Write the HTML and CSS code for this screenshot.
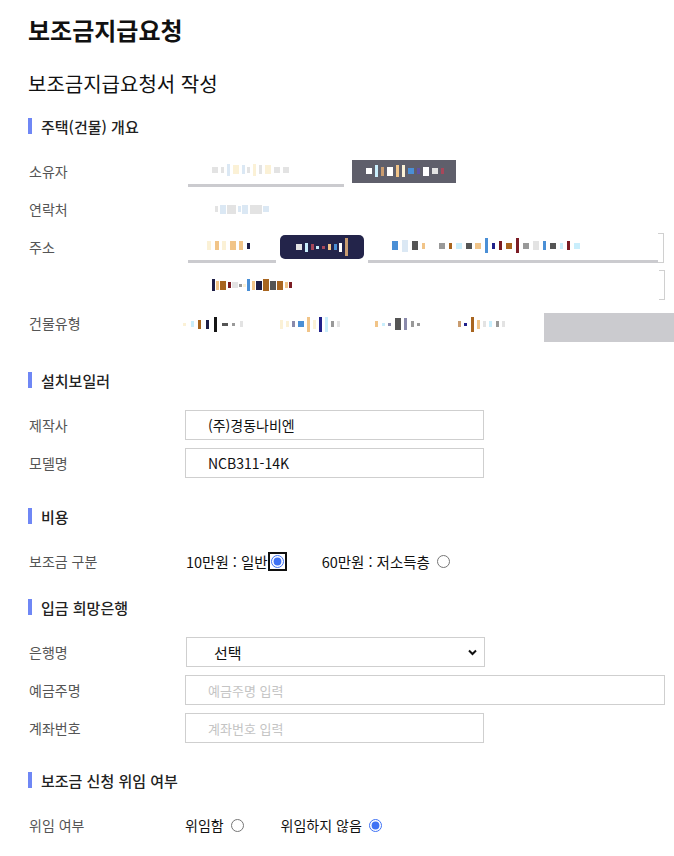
FILE: index.html
```html
<!DOCTYPE html>
<html lang="ko">
<head>
<meta charset="utf-8">
<title>보조금지급요청</title>
<link rel="stylesheet" href="styles.css">
</head>
<body>
<main class="page">
  <h1 class="title">보조금지급요청</h1>
  <h2 class="subtitle">보조금지급요청서 작성</h2>

  <section class="sec sec-1">
    <h3 class="sec-head">주택(건물) 개요</h3>
    <div class="row">
      <span class="label">소유자</span>
      <div class="field">
        <span class="uline owner-in"><span class="pix owner-pix"><b class="k7 w6 h6"></b><b class="k7 w3 h6"></b><b class="kc w3 h12"></b><b class="k3 w6 h9"></b><b class="kc w3 h9"></b><b class="k7 w3 h6"></b><b class="k3 w3 h12"></b><b class="k7 w3 h9"></b><b class="k3 w6 h9"></b><b class="k7 w6 h6"></b><b class="k7 w6 h6"></b></span></span>
        <span class="chip chip-grey"><span class="pix chip-pix"><b class="kb w6 h6"></b><b class="k4 w3 h12"></b><b class="kt w3 h9"></b><b class="kb w6 h9"></b><b class="k2 w3 h12"></b><b class="k3 w3 h12"></b><b class="k8 w6 h6"></b><b class="kv w3 h6"></b><b class="kb w6 h9"></b><b class="k7 w6 h6"></b><b class="kr w3 h6"></b></span></span>
      </div>
    </div>
    <div class="row">
      <span class="label">연락처</span>
      <div class="field">
        <span class="pix phone-pix"><b class="k7 w3 h6"></b><b class="kc w6 h9"></b><b class="k7 w9 h9"></b><b class="kc w3 h6"></b><b class="kc w6 h9"></b><b class="k7 w12 h9"></b><b class="kc w6 h6"></b></span>
      </div>
    </div>
    <div class="row">
      <span class="label">주소</span>
      <div class="field">
        <span class="uline zip-in"><span class="pix zip-pix"><b class="k3 w4 h9"></b><b class="k2 w4 h9"></b><b class="k3 w4 h9"></b><b class="k2 w6 h9"></b><b class="k2 w4 h9"></b><b class="k0 w3 h6"></b></span></span>
        <span class="chip chip-navy"><span class="pix navy-pix"><b class="k7 w6 h6"></b><b class="k4 w3 h9"></b><b class="kr w3 h6"></b><b class="k4 w3 h3"></b><b class="kr w3 h3"></b><b class="k2 w3 h6"></b><b class="k8 w3 h6"></b><b class="kb w3 h9"></b><b class="kt w3 h18"></b></span></span>
        <span class="addr-box">
          <span class="uline addr-in"><span class="pix addr-pix"><b class="k8 w6 h9"></b><b class="kc w6 h12"></b><b class="k5 w6 h9"></b><b class="k2 w3 h6"></b><b class="kb w6 h6"></b><b class="k6 w6 h6"></b><b class="k1 w3 h6"></b><b class="k4 w6 h6"></b><b class="k5 w6 h6"></b><b class="k2 w6 h6"></b><b class="k8 w3 h15"></b><b class="ka w3 h6"></b><b class="k9 w3 h9"></b><b class="k1 w6 h6"></b><b class="k9 w3 h15"></b><b class="k6 w6 h6"></b><b class="k7 w6 h9"></b><b class="k8 w3 h9"></b><b class="k5 w6 h6"></b><b class="k4 w3 h6"></b><b class="k9 w3 h9"></b><b class="k4 w6 h6"></b></span></span>
          <span class="bracket"></span>
        </span>
      </div>
    </div>
    <div class="row">
      <span class="label"></span>
      <div class="field">
        <span class="pix addr2-pix"><b class="k0 w3 h12"></b><b class="k2 w3 h9"></b><b class="k1 w6 h9"></b><b class="k9 w3 h6"></b><b class="k7 w6 h6"></b><b class="k6 w3 h3"></b><b class="k3 w3 h3"></b><b class="k8 w3 h12"></b><b class="k2 w3 h9"></b><b class="k0 w6 h9"></b><b class="k1 w6 h12"></b><b class="k5 w6 h9"></b><b class="k1 w6 h9"></b><b class="k2 w3 h6"></b><b class="k9 w3 h6"></b></span>
        <span class="bracket bracket-end"></span>
      </div>
    </div>
    <div class="row">
      <span class="label">건물유형</span>
      <div class="field">
        <span class="pix bt bt1"><b class="k3 w3 h3"></b><b class="k4 w3 h6"></b><b class="k1 w3 h9"></b><b class="k0 w3 h9"></b><b class="kk w3 h15"></b><b class="k5 w6 h3"></b><b class="k6 w3 h3"></b><b class="k7 w3 h6"></b></span>
        <span class="pix bt bt2"><b class="k3 w3 h9"></b><b class="k3 w3 h6"></b><b class="kp w3 h6"></b><b class="k8 w6 h6"></b><b class="k2 w3 h15"></b><b class="k3 w3 h9"></b><b class="ka w3 h15"></b><b class="k4 w3 h15"></b><b class="k6 w3 h6"></b><b class="k7 w3 h6"></b></span>
        <span class="pix bt bt3"><b class="k2 w3 h6"></b><b class="k4 w3 h3"></b><b class="kp w3 h3"></b><b class="k5 w6 h12"></b><b class="kp w3 h12"></b><b class="k6 w3 h6"></b><b class="k6 w3 h3"></b></span>
        <span class="pix bt bt4"><b class="kt w3 h6"></b><b class="ka w3 h3"></b><b class="k1 w3 h15"></b><b class="k2 w3 h9"></b><b class="k7 w3 h6"></b><b class="k4 w3 h6"></b><b class="k6 w3 h6"></b><b class="k7 w3 h6"></b></span>
        <span class="grey-box"></span>
      </div>
    </div>
  </section>

  <section class="sec sec-2">
    <h3 class="sec-head">설치보일러</h3>
    <div class="row">
      <span class="label">제작사</span>
      <div class="field"><input class="input" type="text" value="(주)경동나비엔"></div>
    </div>
    <div class="row">
      <span class="label">모델명</span>
      <div class="field"><input class="input" type="text" value="NCB311-14K"></div>
    </div>
  </section>

  <section class="sec sec-3">
    <h3 class="sec-head">비용</h3>
    <div class="row">
      <span class="label">보조금 구분</span>
      <div class="field options">
        <label class="opt">10만원 : 일반<input class="radio focused" type="radio" name="cost" checked></label>
        <label class="opt">60만원 : 저소득층 <input class="radio" type="radio" name="cost"></label>
      </div>
    </div>
  </section>

  <section class="sec sec-4">
    <h3 class="sec-head">입금 희망은행</h3>
    <div class="row">
      <span class="label">은행명</span>
      <div class="field">
        <span class="select-wrap">
          <select class="select"><option>선택</option></select>
          <svg class="chev" width="9" height="7" viewBox="0 0 9 7"><path d="M1 1.5 L4.5 5 L8 1.5" fill="none" stroke="#111" stroke-width="2"/></svg>
        </span>
      </div>
    </div>
    <div class="row">
      <span class="label">예금주명</span>
      <div class="field"><input class="input input-wide" type="text" placeholder="예금주명 입력"></div>
    </div>
    <div class="row">
      <span class="label">계좌번호</span>
      <div class="field"><input class="input" type="text" placeholder="계좌번호 입력"></div>
    </div>
  </section>

  <section class="sec sec-5">
    <h3 class="sec-head">보조금 신청 위임 여부</h3>
    <div class="row">
      <span class="label">위임 여부</span>
      <div class="field options options-2">
        <label class="opt opt-sm">위임함 <input class="radio" type="radio" name="deleg"></label>
        <label class="opt opt-sm">위임하지 않음 <input class="radio" type="radio" name="deleg" checked></label>
      </div>
    </div>
  </section>
</main>
</body>
</html>
```

FILE: styles.css
```css
html, body {
  margin: 0;
  padding: 0;
  background: #fff;
}

body {
  font-family: "Noto Sans CJK KR", "Noto Sans", sans-serif;
  color: #111;
  overflow: hidden;
}

.page {
  padding: 13px 0 0 28px;
  width: 636px;
}

.title {
  margin: 0;
  font-size: 24px;
  font-weight: 700;
  line-height: 34px;
  color: #111;
}

.subtitle {
  margin: 22px 0 0;
  font-size: 20px;
  font-weight: 400;
  line-height: 30px;
  color: #111;
}

.sec-head {
  display: flex;
  align-items: center;
  gap: 9px;
  height: 30px;
  margin: 0 0 11px;
  font-size: 15px;
  font-weight: 500;
  color: #222;
}

.sec-head::before {
  content: "";
  width: 4px;
  height: 16px;
  background: #6f87f5;
}

.sec-1 { margin-top: 12px; }
.sec-2 { margin-top: 23px; }
.sec-3 { margin-top: 19px; }
.sec-4 { margin-top: 12px; }
.sec-5 { margin-top: 18px; }

.row {
  display: grid;
  grid-template-columns: 158px 1fr;
  height: 38px;
  align-items: center;
}

.label {
  font-size: 14px;
  color: #555;
  padding-left: 1px;
}

.field {
  display: flex;
  align-items: center;
  height: 38px;
}

/* blurred / pixelated content */
.pix {
  display: inline-flex;
  flex: none;
  align-items: center;
  justify-content: space-between;
}

.pix b { display: block; flex: none; }

.w3 { width: 3px; }
.w4 { width: 4px; }
.w6 { width: 6px; }
.w9 { width: 9px; }
.w12 { width: 12px; }
.h3 { height: 3px; }
.h6 { height: 6px; }
.h9 { height: 9px; }
.h12 { height: 12px; }
.h15 { height: 15px; }
.h18 { height: 18px; }

.k0 { background: #1d1d45; }
.k1 { background: #a8651f; }
.k2 { background: #f1c488; }
.k3 { background: #fbf1d6; }
.k4 { background: #c9eefc; }
.k5 { background: #555; }
.k6 { background: #999; }
.k7 { background: #e3e3e3; }
.k8 { background: #4a8fd6; }
.k9 { background: #7b1c24; }
.ka { background: #20208a; }
.kb { background: #fff; }
.kc { background: #dbe8f4; }
.kt { background: #c99c70; }
.kv { background: #5e52a6; }
.kr { background: #a8475a; }
.kk { background: #161616; }
.kp { background: #8a8aab; }

.uline {
  box-sizing: border-box;
  display: flex;
  align-items: center;
  height: 28px;
  margin-top: 4px;
  border-bottom: 3px solid #cbcbcf;
}

.owner-in {
  width: 156px;
  margin-left: 2px;
}

.owner-pix { width: 77px; margin-left: 24px; margin-top: -4px; }

.chip {
  display: flex;
  align-items: center;
  box-sizing: border-box;
}

.chip-grey {
  width: 104px;
  height: 23px;
  margin-left: 8px;
  padding-left: 14px;
  background: #5f5f6b;
}

.chip-pix { width: 78px; }

.chip-navy {
  width: 84px;
  height: 24px;
  margin-left: 4px;
  border-radius: 5px;
  background: #23244a;
  padding-left: 16px;
}

.navy-pix { width: 52px; }

.phone-pix { width: 54px; margin-left: 29px; }

.zip-in {
  width: 88px;
  margin-left: 2px;
}

.zip-pix { width: 43px; margin-left: 19px; margin-top: -4px; }

.addr-box {
  display: flex;
  align-items: flex-end;
  width: 296px;
  margin-left: 4px;
}

.addr-in {
  flex: 1;
}

.addr-pix { width: 188px; margin-left: 24px; margin-top: -4px; }

.bracket {
  box-sizing: border-box;
  flex: none;
  width: 6px;
  height: 30px;
  border: 1px solid #d0d0d0;
  border-left: none;
}

.addr2-pix { width: 80px; margin-left: 26px; }

.bracket-end { margin-left: auto; margin-right: -1px; }

.bt { margin-top: 2px; }
.bt1 { width: 60px; margin-left: -3px; }
.bt2 { width: 60px; margin-left: 37px; }
.bt3 { width: 45px; margin-left: 35px; }
.bt4 { width: 47px; margin-left: 38px; }

.grey-box {
  flex: none;
  width: 140px;
  height: 29px;
  margin-left: 39px;
  margin-top: 8px;
  background: #cbcbcf;
}

/* inputs */
.input {
  box-sizing: border-box;
  width: 299px;
  height: 30px;
  margin: 0 0 0 -1px;
  padding: 0 0 0 22px;
  border: 1px solid #cfcfcf;
  font-family: inherit;
  font-size: 14px;
  color: #111;
  background: #fff;
  outline: none;
}

.input::placeholder {
  color: #c4c4c4;
  font-size: 13px;
}

.input-wide { width: 480px; }

.select-wrap {
  position: relative;
  display: block;
  width: 299px;
}

.select {
  box-sizing: border-box;
  display: block;
  width: 100%;
  height: 30px;
  margin: 0;
  padding: 0 0 0 27px;
  border: 1px solid #cfcfcf;
  border-radius: 0;
  appearance: none;
  -webkit-appearance: none;
  background: #fff;
  font-family: inherit;
  font-size: 15px;
  color: #111;
}

.chev {
  position: absolute;
  right: 8px;
  top: 12px;
}

/* radios */
.options {
  gap: 38px;
}

.options-2 {
  gap: 37px;
  margin-left: -1px;
}

.opt {
  display: inline-flex;
  align-items: center;
  font-size: 14.5px;
  color: #111;
  white-space: pre;
}

.opt-sm {
  font-size: 14px;
}

.radio {
  width: 13px;
  height: 13px;
  margin: 1px 0 0 3px;
  accent-color: #3f72f4;
}

.radio.focused {
  outline: 2px solid #101010;
  outline-offset: 1px;
  border-radius: 6px;
}
```
